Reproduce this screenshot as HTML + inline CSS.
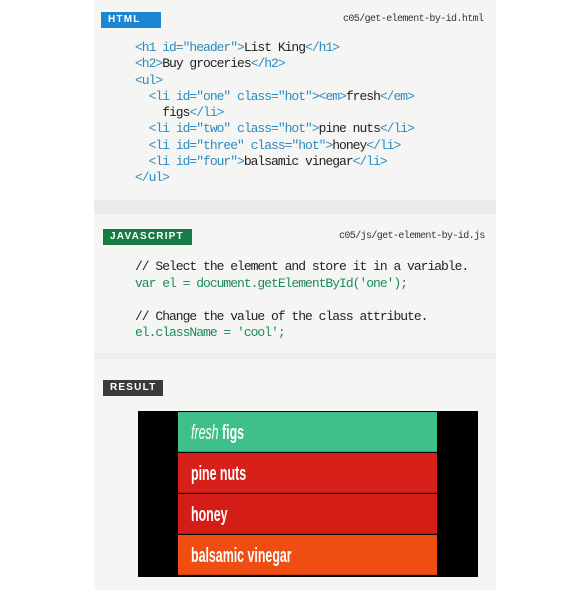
<!DOCTYPE html>
<html><head><style>
body{margin:0;width:586px;height:590px;background:#fff;position:relative;overflow:hidden;font-family:"Liberation Sans",sans-serif}
.panel{position:absolute;left:94px;top:0;width:402px;height:590px;background:#f5f5f4}
.band{position:absolute;left:94px;width:402px;background:#ecebea}
.lab{position:absolute;color:#fff;font-weight:bold;font-size:10px;letter-spacing:1.2px;line-height:16px;padding-left:7px;box-sizing:border-box;white-space:nowrap}
.fn{position:absolute;font-family:"Liberation Mono",monospace;font-size:10px;letter-spacing:-0.6px;color:#333}
pre{position:absolute;margin:0;font-family:"Liberation Mono",monospace;font-size:13px;letter-spacing:-1px;line-height:16.3px;color:#222}
.t{color:#2b8cc0}.g{color:#1d8a5c}
.box{position:absolute;left:138px;top:411px;width:340px;height:166px;background:#000}
.row{position:absolute;left:40px;width:259px;height:40px;color:#fff;font-size:20px;font-weight:bold;line-height:42px;padding-left:13px;box-sizing:border-box;border-bottom:1px solid rgba(0,0,0,.15)}
.row span{display:inline-block;transform:scaleX(0.62);transform-origin:left;white-space:nowrap}
.row i{font-weight:normal}
</style></head><body>
<div class="panel"></div>
<div class="band" style="top:200px;height:14px"></div>
<div class="band" style="top:353px;height:6px;background:#efefee"></div>
<div class="lab" style="left:101px;top:12px;width:60px;background:#1d86d2">HTML</div>
<div class="fn" style="left:343px;top:14px">c05/get-element-by-id.html</div>
<pre style="left:135px;top:40px"><span class="t">&lt;h1 id="header"&gt;</span>List King<span class="t">&lt;/h1&gt;</span>
<span class="t">&lt;h2&gt;</span>Buy groceries<span class="t">&lt;/h2&gt;</span>
<span class="t">&lt;ul&gt;</span>
  <span class="t">&lt;li id="one" class="hot"&gt;&lt;em&gt;</span>fresh<span class="t">&lt;/em&gt;</span>
    figs<span class="t">&lt;/li&gt;</span>
  <span class="t">&lt;li id="two" class="hot"&gt;</span>pine nuts<span class="t">&lt;/li&gt;</span>
  <span class="t">&lt;li id="three" class="hot"&gt;</span>honey<span class="t">&lt;/li&gt;</span>
  <span class="t">&lt;li id="four"&gt;</span>balsamic vinegar<span class="t">&lt;/li&gt;</span>
<span class="t">&lt;/ul&gt;</span></pre>
<div class="lab" style="left:103px;top:229px;width:89px;background:#187a44">JAVASCRIPT</div>
<div class="fn" style="left:339px;top:231px">c05/js/get-element-by-id.js</div>
<pre style="left:135px;top:259px;line-height:16.5px">// Select the element and store it in a variable.
<span class="g">var el = document.getElementById('one');</span>

// Change the value of the class attribute.
<span class="g">el.className = 'cool';</span></pre>
<div class="lab" style="left:103px;top:380px;width:60px;background:#3b3b3b">RESULT</div>
<div class="box">
<div class="row" style="top:1px;background:#3fbf8a"><span><i>fresh</i> figs</span></div>
<div class="row" style="top:42px;background:#d7201a"><span>pine nuts</span></div>
<div class="row" style="top:83px;background:#d51d18"><span>honey</span></div>
<div class="row" style="top:124px;background:#ef4d12"><span>balsamic vinegar</span></div>
</div>
</body></html>
